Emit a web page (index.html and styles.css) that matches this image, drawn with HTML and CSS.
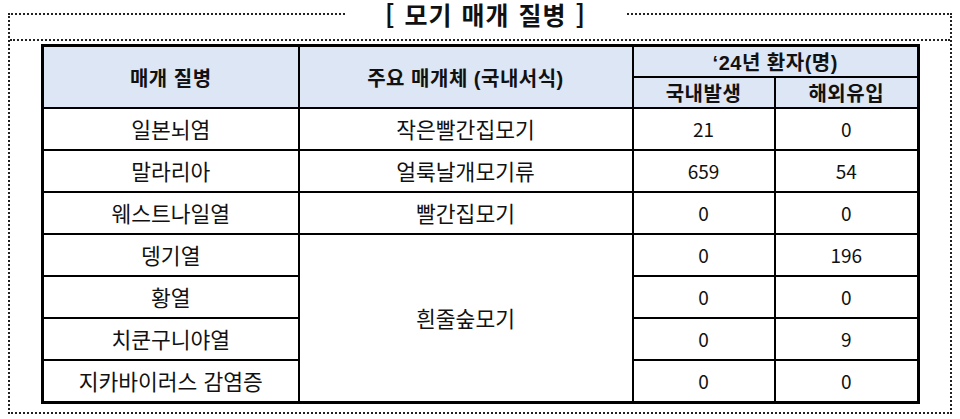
FILE: index.html
```html
<!DOCTYPE html>
<html lang="ko">
<head>
<meta charset="utf-8">
<link rel="stylesheet" href="styles.css">
</head>
<body>
<fieldset class="frame">
  <legend class="title">[ 모기 매개 질병 ]</legend>
  <div class="rule"></div>
  <table class="grid">
    <colgroup>
      <col class="c1"><col class="c2"><col class="c3"><col class="c4">
    </colgroup>
    <thead>
      <tr class="h1">
        <th rowspan="2">매개 질병</th>
        <th rowspan="2">주요 매개체 (국내서식)</th>
        <th colspan="2">‘24년 환자(명)</th>
      </tr>
      <tr class="h2">
        <th>국내발생</th>
        <th>해외유입</th>
      </tr>
    </thead>
    <tbody>
      <tr><td>일본뇌염</td><td>작은빨간집모기</td><td class="num">21</td><td class="num">0</td></tr>
      <tr><td>말라리아</td><td>얼룩날개모기류</td><td class="num">659</td><td class="num">54</td></tr>
      <tr><td>웨스트나일열</td><td>빨간집모기</td><td class="num">0</td><td class="num">0</td></tr>
      <tr><td>뎅기열</td><td rowspan="4">흰줄숲모기</td><td class="num">0</td><td class="num">196</td></tr>
      <tr><td>황열</td><td class="num">0</td><td class="num">0</td></tr>
      <tr><td>치쿤구니야열</td><td class="num">0</td><td class="num">9</td></tr>
      <tr><td>지카바이러스 감염증</td><td class="num">0</td><td class="num">0</td></tr>
    </tbody>
  </table>
</fieldset>
</body>
</html>
```
FILE: styles.css
```css
html, body {
  margin: 0;
  padding: 0;
  background: #ffffff;
}
body {
  font-family: "Noto Sans CJK KR", "Liberation Sans", sans-serif;
  color: #111;
}
.frame {
  margin: 0 8px;
  padding: 0 0 8px 0;
  width: 944px;
  box-sizing: border-box;
  border: 2px dotted #222;
  min-inline-size: 0;
}
.title {
  margin-left: 335px;
  padding: 0 40px;
  font-size: 25px;
  font-weight: 700;
  line-height: 28px;
  height: 28px;
  color: #111;
  letter-spacing: 1px;
  word-spacing: 1px;
}
.rule {
  height: 11px;
  border-bottom: 2px dotted #222;
}
.grid {
  margin: 3px 0 0 31px;
  border-collapse: collapse;
  border: 3px solid #000;
  table-layout: fixed;
  width: 876px;
}
.c1 { width: 256px; }
.c2 { width: 334px; }
.c3 { width: 142px; }
.c4 { width: 144px; }
.grid th, .grid td {
  border: 2px solid #000;
  text-align: center;
  vertical-align: middle;
  padding: 0;
}
.grid th {
  background: #dce6f4;
  font-weight: 700;
  font-size: 20px;
  font-family: "Liberation Sans", "Noto Sans CJK KR", sans-serif;
  letter-spacing: 0.5px;
}
.h1 { height: 28px; }
.h2 { height: 31px; }
.grid td {
  font-size: 21.5px;
  height: 40px;
  font-weight: 400;
  line-height: 24px;
}
.grid td.num {
  font-size: 19px;
}
```
